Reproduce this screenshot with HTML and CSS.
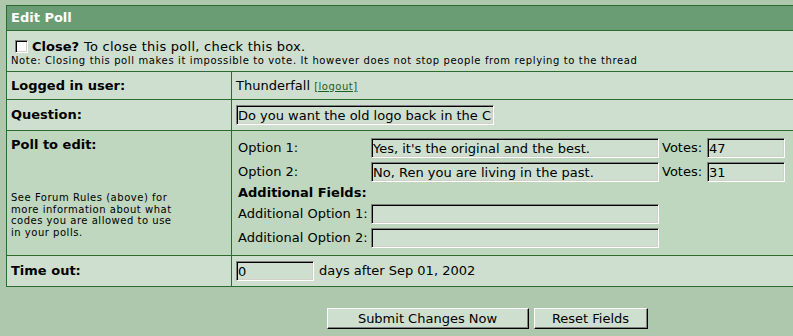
FILE: index.html
```html
<!DOCTYPE html>
<html>
<head>
<meta charset="utf-8">
<link rel="stylesheet" href="styles.css">
</head>
<body>
<form class="page">
  <div class="poll-table">
    <div class="cell head span2">Edit Poll</div>
    <div class="cell close span2">
      <div class="close-line"><input type="checkbox" class="check"><b class="close-label">Close?</b><span class="close-text">To close this poll, check this box.</span></div>
      <div class="note">Note: Closing this poll makes it impossible to vote. It however does not stop people from replying to the thread</div>
    </div>

    <div class="cell label mid">Logged in user:</div>
    <div class="cell value mid">Thunderfall&nbsp;<a class="logout" href="#">[logout]</a></div>

    <div class="cell label mid">Question:</div>
    <div class="cell value mid"><input class="field question" type="text" value="Do you want the old logo back in the Classic forums?"></div>

    <div class="cell label poll-left alt">
      <div class="poll-title">Poll to edit:</div>
      <div class="small">See Forum Rules (above) for<br>more information about what<br>codes you are allowed to use<br>in your polls.</div>
    </div>
    <div class="cell value poll-right alt">
      <div class="options">
        <span class="opt-label">Option 1:</span>
        <input class="field opt" type="text" value="Yes, it's the original and the best.">
        <span class="votes-label">Votes:</span>
        <input class="field votes" type="text" value="47">

        <span class="opt-label">Option 2:</span>
        <input class="field opt" type="text" value="No, Ren you are living in the past.">
        <span class="votes-label">Votes:</span>
        <input class="field votes" type="text" value="31">

        <b class="add-title">Additional Fields:</b>

        <span class="opt-label">Additional Option 1:</span>
        <input class="field opt" type="text" value="">
        <span></span><span></span>

        <span class="opt-label">Additional Option 2:</span>
        <input class="field opt" type="text" value="">
        <span></span><span></span>
      </div>
    </div>

    <div class="cell label mid">Time out:</div>
    <div class="cell value mid"><input class="field timeout" type="text" value="0"><span class="days">days after Sep 01, 2002</span></div>
  </div>

  <div class="buttons">
    <button type="button" class="btn submit">Submit Changes Now</button>
    <button type="button" class="btn reset">Reset Fields</button>
  </div>
</form>
</body>
</html>
```

FILE: styles.css
```css
html {
  background: #aec8ae;
}
body {
  margin: 0;
  overflow: hidden;
  font-family: "DejaVu Sans", Verdana, sans-serif;
  font-size: 13px;
  color: #000;
  background: #aec8ae;
}
.page {
  padding: 5px 0 0 6px;
  width: 962px;
}
.poll-table {
  display: grid;
  grid-template-columns: 224px 1fr;
  grid-template-rows: 24px 40px 27px 30px 124px 30px;
  gap: 1px;
  padding: 1px;
  background: #2b6b2b;
}
.cell {
  background: #cedfd0;
  padding: 0 4px;
  line-height: 16px;
}
.cell.alt {
  background: #bed7be;
}
.span2 {
  grid-column: 1 / span 2;
}
.head {
  background: #6b9d74;
  color: #fff;
  font-weight: bold;
  display: flex;
  align-items: center;
}
.close {
  padding-top: 7px;
}
.close-line {
  display: flex;
  align-items: center;
  height: 17px;
  white-space: nowrap;
}
.check {
  appearance: none;
  -webkit-appearance: none;
  width: 13px;
  height: 13px;
  margin: 0 4px 0 4px;
  box-sizing: border-box;
  background: #fff;
  border: 1px solid;
  border-color: #808080 #fff #fff #808080;
  box-shadow: inset 1px 1px 0 #000, inset -1px -1px 0 #d4d0c8;
}
.close-text {
  margin-left: 5px;
  letter-spacing: 0.25px;
}
.note {
  font-size: 10px;
  line-height: 12px;
  letter-spacing: 0.62px;
  white-space: nowrap;
}
.label {
  font-weight: bold;
}
.mid {
  display: flex;
  align-items: center;
}
.value {
  white-space: nowrap;
}
.logout {
  font-size: 10px;
  letter-spacing: 0.5px;
  color: #1e5e1e;
  text-decoration: underline;
  margin-top: 2px;
}
.field {
  box-sizing: border-box;
  height: 20px;
  margin: 0;
  padding: 0 1px;
  font-family: "DejaVu Sans", Verdana, sans-serif;
  font-size: 13px;
  color: #000;
  background: #cedfd0;
  border: 1px solid;
  border-color: #808080 #fff #fff #808080;
  box-shadow: inset 1px 1px 0 #000, inset -1px -1px 0 #d4d0c8;
  outline: none;
}
.question {
  width: 258px;
}
.timeout {
  width: 78px;
}
.days {
  margin-left: 5px;
}
.poll-left {
  padding-top: 6px;
}
.small {
  font-size: 10px;
  line-height: 11.7px;
  letter-spacing: 0.52px;
  font-weight: normal;
  margin-top: 39px;
}
.poll-right {
  padding-top: 5px;
}
.options {
  display: grid;
  grid-template-columns: 135px 288px 48px 78px;
  grid-template-rows: 24px 24px 18px 24px 24px;
  align-items: center;
}
.opt-label {
  padding-left: 2px;
}
.votes-label {
  padding-left: 3px;
}
.opt, .votes {
  width: 100%;
}
.add-title {
  grid-column: 1 / span 4;
  padding-left: 2px;
}
.buttons {
  display: flex;
  justify-content: center;
  gap: 5px;
  margin-top: 21px;
}
.btn {
  box-sizing: border-box;
  height: 21px;
  margin: 0;
  padding: 0;
  font-family: "DejaVu Sans", Verdana, sans-serif;
  font-size: 13px;
  color: #000;
  background: #cedfd0;
  border: 1px solid;
  border-color: #fff #000 #000 #fff;
  box-shadow: inset -1px -1px 0 #808080;
}
.submit {
  width: 202px;
}
.reset {
  width: 114px;
}
```
